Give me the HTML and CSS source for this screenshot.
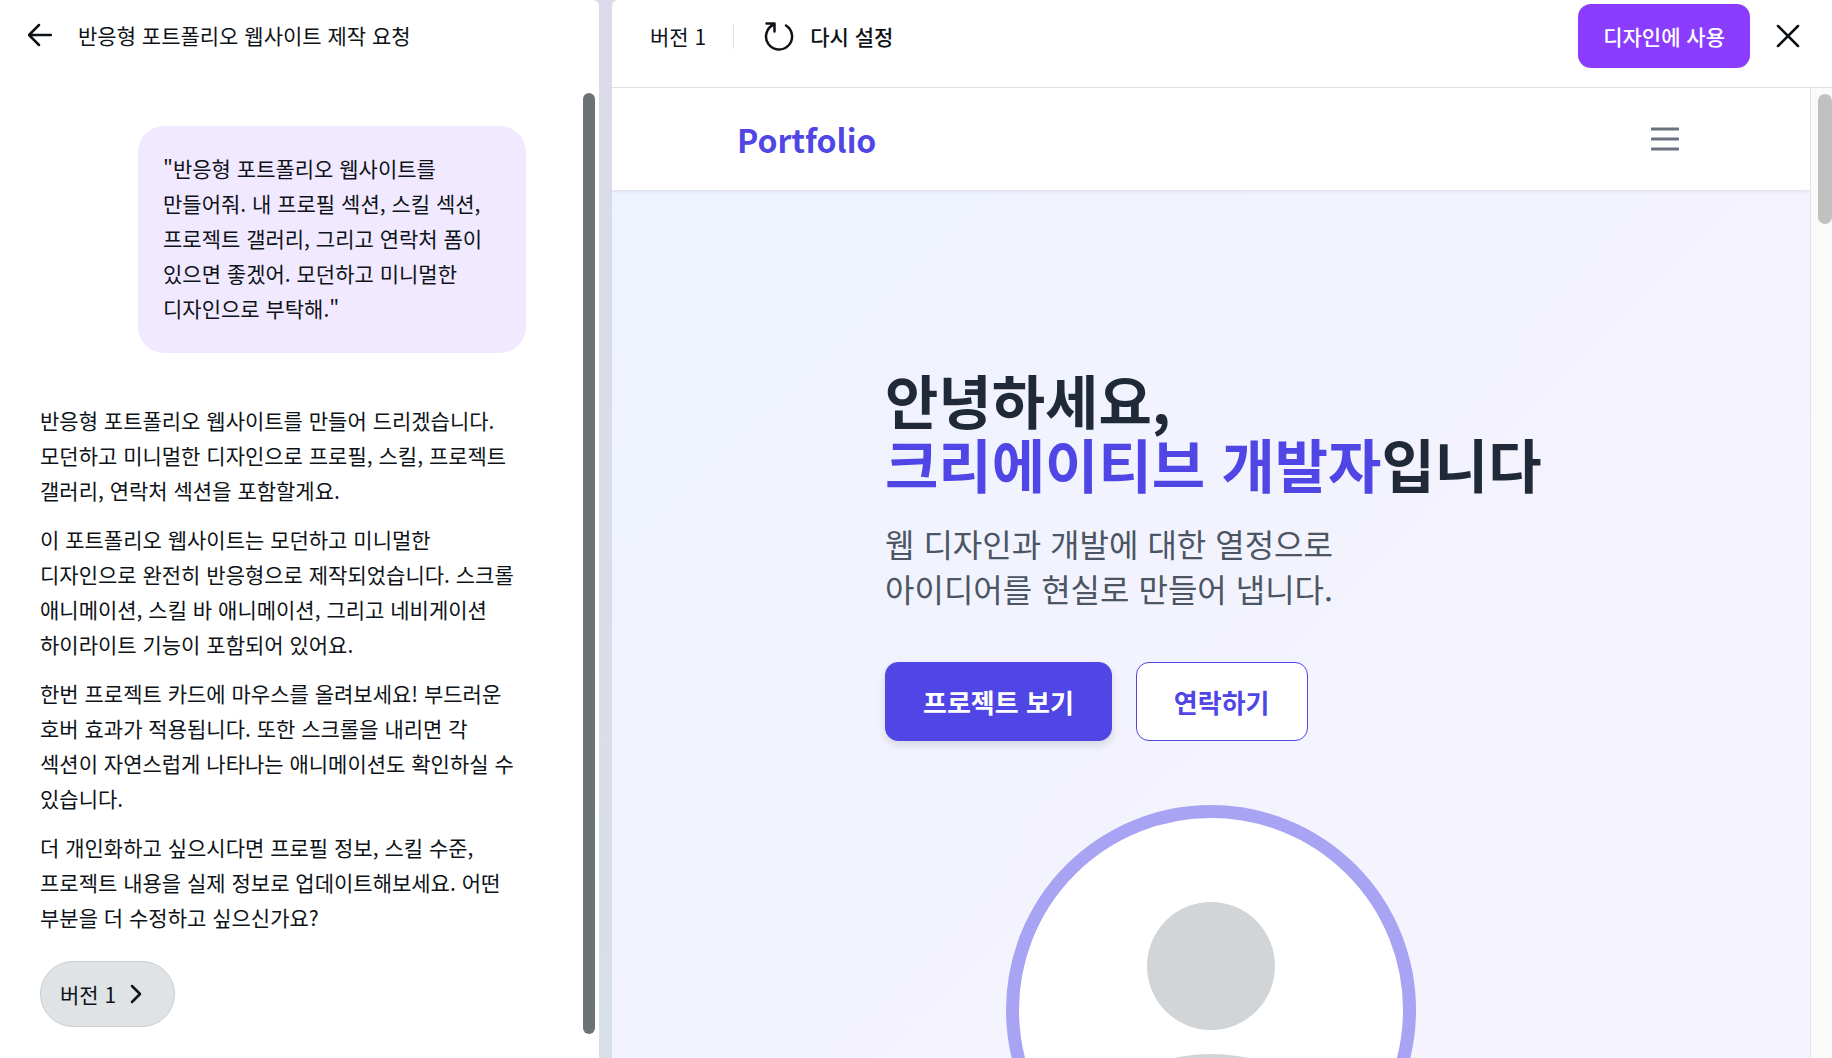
FILE: index.html
```html
<!DOCTYPE html>
<html lang="ko">
<head>
    <meta charset="UTF-8">
    <title>반응형 포트폴리오 웹사이트 제작 요청</title>
    <link rel="stylesheet" href="styles.css">
</head>
<body>
<div id="home">
    <!-- 대화 패널 -->
    <aside class="chat">
        <div class="chat-top">
            <button class="icon-btn" type="button" aria-label="뒤로">
                <svg width="24" height="24" viewBox="0 0 24 24">
                    <path d="M11 2 1 12l10 10M1 12h22"/>
                </svg>
            </button>
            <div class="title">반응형 포트폴리오 웹사이트 제작 요청</div>
        </div>
        <div class="chat-body">
            <div class="messages">
                <div class="bubble">"반응형 포트폴리오 웹사이트를 만들어줘. 내 프로필 섹션, 스킬 섹션, 프로젝트 갤러리, 그리고 연락처 폼이 있으면 좋겠어. 모던하고 미니멀한 디자인으로 부탁해."</div>
                <div class="answer">
                    <p>반응형 포트폴리오 웹사이트를 만들어 드리겠습니다. 모던하고 미니멀한 디자인으로 프로필, 스킬, 프로젝트 갤러리, 연락처 섹션을 포함할게요.</p>
                    <p>이 포트폴리오 웹사이트는 모던하고 미니멀한 디자인으로 완전히 반응형으로 제작되었습니다. 스크롤 애니메이션, 스킬 바 애니메이션, 그리고 네비게이션 하이라이트 기능이 포함되어 있어요.</p>
                    <p>한번 프로젝트 카드에 마우스를 올려보세요! 부드러운 호버 효과가 적용됩니다. 또한 스크롤을 내리면 각 섹션이 자연스럽게 나타나는 애니메이션도 확인하실 수 있습니다.</p>
                    <p>더 개인화하고 싶으시다면 프로필 정보, 스킬 수준, 프로젝트 내용을 실제 정보로 업데이트해보세요. 어떤 부분을 더 수정하고 싶으신가요?</p>
                </div>
                <button class="chip" type="button">
                    버전 1
                    <svg width="12" height="20" viewBox="0 0 12 20">
                        <path d="m2 2 8 8-8 8"/>
                    </svg>
                </button>
            </div>
            <div class="chat-scroll"></div>
        </div>
    </aside>

    <!-- 미리보기 패널 -->
    <main class="preview">
        <div class="preview-top">
            <span>버전 1</span>
            <span class="line"></span>
            <button class="reset" type="button">
                <svg width="30" height="30" viewBox="0 0 30 30">
                    <path d="M22 4.500a13 13 0 1 1-12-1M2.500 2.500h8v8"/>
                </svg>
                다시 설정
            </button>
            <button class="use" type="button">디자인에 사용</button>
            <button class="icon-btn" type="button" aria-label="닫기">
                <svg width="24" height="24" viewBox="0 0 24 24">
                    <path d="m2 2 20 20M22 2 2 22"/>
                </svg>
            </button>
        </div>
        <div class="preview-body">
            <div class="site">
                <nav>
                    <a class="logo" href="#">Portfolio</a>
                    <button class="menu" type="button" aria-label="메뉴">
                        <svg width="28" height="24" viewBox="0 0 28 24">
                            <path d="M1 2h26M1 12h26M1 22h26"/>
                        </svg>
                    </button>
                </nav>
                <section class="hero">
                    <div class="intro">
                        <h1>안녕하세요,<br><span>크리에이티브 개발자</span>입니다</h1>
                        <p>웹 디자인과 개발에 대한 열정으로<br>아이디어를 현실로 만들어 냅니다.</p>
                        <div class="links">
                            <a class="primary" href="#projects">프로젝트 보기</a>
                            <a class="outline" href="#contact">연락하기</a>
                        </div>
                    </div>
                    <div class="avatar">
                        <svg viewBox="0 0 384 384">
                            <circle cx="192" cy="148" r="64"/>
                            <ellipse cx="192" cy="364" rx="150" ry="128"/>
                        </svg>
                    </div>
                </section>
            </div>
            <div class="site-scroll">
                <div class="thumb"></div>
            </div>
        </div>
    </main>
</div>
</body>
</html>
```
FILE: styles.css
```css
* {
    padding: 0;
    margin: 0;
    box-sizing: border-box;
}

body, html, #home {
    width: 100%;
    height: 100%;
}

body {
    font-family: "Noto Sans CJK KR", sans-serif;
    font-size: 21px;
    line-height: 35px;
    color: #0e1318;
    word-break: keep-all;
    overflow: hidden;
}

button {
    font: inherit;
    color: inherit;
    background: none;
    border: none;
    cursor: pointer;
}

a {
    text-decoration: none;
}

svg {
    display: block;
    fill: none;
    stroke: currentColor;
    stroke-width: 2.5;
    stroke-linecap: round;
    stroke-linejoin: round;
}

#home {
    display: grid;
    grid-template-columns: 599px 1fr;
    column-gap: 13px;
    background: linear-gradient(#dcdaea, #d7dfe8);
}

/* 대화 패널 */
.chat {
    display: flex;
    flex-direction: column;
    min-height: 0;
    background: #fff;
    border-top-right-radius: 6px;
}

.chat-top {
    display: flex;
    align-items: center;
    gap: 26px;
    height: 88px;
    padding: 0 28px 18px;
}

.chat-body {
    flex: 1;
    display: flex;
    justify-content: space-between;
    min-height: 0;
    padding-right: 4px;
}

.messages {
    width: 526px;
    padding: 38px 0 0 40px;
}

.bubble {
    width: 388px;
    margin-left: auto;
    padding: 25px 25px 27px;
    background: #f1e9ff;
    border-radius: 26px;
}

.answer {
    display: flex;
    flex-direction: column;
    gap: 14px;
    margin: 50px 0 26px;
}

.chip {
    display: flex;
    align-items: center;
    gap: 14px;
    height: 66px;
    padding: 0 32px 0 19px;
    background: #dfe3e6;
    border: 1px solid #c8cdd1;
    border-radius: 33px;
}

.chat-scroll {
    width: 12px;
    margin: 5px 0 24px;
    background: #6c7374;
    border-radius: 6px;
}

/* 미리보기 패널 */
.preview {
    display: flex;
    flex-direction: column;
    min-width: 0;
    min-height: 0;
    background: #fff;
    border-top-left-radius: 6px;
}

.preview-top {
    display: flex;
    align-items: center;
    height: 88px;
    padding: 4px 32px 19px 38px;
    border-bottom: 1px solid #dfe1e6;
}

.line {
    width: 1px;
    height: 25px;
    margin: 0 30px 0 27px;
    background: #dfe1e6;
}

.reset {
    display: flex;
    align-items: center;
    gap: 16px;
    font-weight: 500;
}

.use {
    height: 64px;
    margin: 0 26px 0 auto;
    padding: 0 25px;
    font-weight: 500;
    color: #fff;
    background: #8b3dff;
    border-radius: 13px;
}

.preview-body {
    flex: 1;
    display: flex;
    min-height: 0;
}

.site {
    flex: 1;
    display: flex;
    flex-direction: column;
    overflow: hidden;
}

.site-scroll {
    width: 22px;
    padding: 6px 0 0 7px;
    background: #fafafa;
    border-left: 1px solid #e4e4e8;
}

.thumb {
    height: 130px;
    background: #c1c1c1;
    border-radius: 7px;
}

nav {
    position: relative;
    display: flex;
    flex: none;
    justify-content: space-between;
    align-items: center;
    height: 102px;
    padding: 0 131px 0 125px;
    box-shadow: 0 1px 4px rgba(0, 0, 0, 0.10);
}

.logo {
    font-size: 32px;
    font-weight: bold;
    color: #4f46e5;
}

.menu {
    color: #6b7280;
}

.menu svg {
    stroke-width: 3;
}

.hero {
    flex: 1;
    display: flex;
    flex-direction: column;
    align-items: center;
    min-height: 0;
    padding-top: 177px;
    background: linear-gradient(135deg, #edf3ff, #f3f3fe 50%, #f5f3fe);
}

.intro {
    width: 652px;
}

h1 {
    font-size: 58px;
    font-weight: bold;
    line-height: 64px;
    color: #1f2937;
    white-space: nowrap;
}

h1 span {
    color: #4f46e5;
}

.intro p {
    margin: 26px 0 51px;
    font-size: 32px;
    line-height: 45px;
    color: #4b5563;
}

.links {
    display: flex;
    gap: 24px;
    margin-bottom: 64px;
    font-size: 26px;
    font-weight: 600;
}

.links a {
    display: flex;
    align-items: center;
    height: 79px;
    padding: 0 37px;
    border: 1px solid #4f46e5;
    border-radius: 13px;
}

.links .primary {
    color: #fff;
    background: #4f46e5;
    box-shadow: 0 4px 8px rgba(0, 0, 0, 0.12);
}

.links .outline {
    color: #4f46e5;
    background: #fff;
}

.avatar {
    flex: none;
    width: 410px;
    height: 410px;
    border: 13px solid #a8a3f2;
    border-radius: 50%;
    background: #fff;
    overflow: hidden;
}

.avatar svg {
    fill: #d1d5d8;
    stroke: none;
}
```
